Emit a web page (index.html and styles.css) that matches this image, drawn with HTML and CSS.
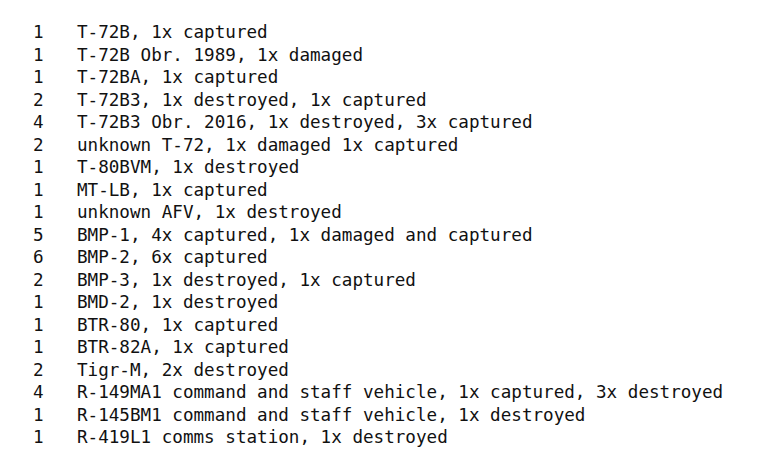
FILE: index.html
```html
<!DOCTYPE html>
<html>
<head>
<meta charset="utf-8">
<link rel="stylesheet" href="styles.css">
</head>
<body>
<div class="list">
  <div class="row"><span class="num">1</span><span class="txt">T-72B, 1x captured</span></div>
  <div class="row"><span class="num">1</span><span class="txt">T-72B Obr. 1989, 1x damaged</span></div>
  <div class="row"><span class="num">1</span><span class="txt">T-72BA, 1x captured</span></div>
  <div class="row"><span class="num">2</span><span class="txt">T-72B3, 1x destroyed, 1x captured</span></div>
  <div class="row"><span class="num">4</span><span class="txt">T-72B3 Obr. 2016, 1x destroyed, 3x captured</span></div>
  <div class="row"><span class="num">2</span><span class="txt">unknown T-72, 1x damaged 1x captured</span></div>
  <div class="row"><span class="num">1</span><span class="txt">T-80BVM, 1x destroyed</span></div>
  <div class="row"><span class="num">1</span><span class="txt">MT-LB, 1x captured</span></div>
  <div class="row"><span class="num">1</span><span class="txt">unknown AFV, 1x destroyed</span></div>
  <div class="row"><span class="num">5</span><span class="txt">BMP-1, 4x captured, 1x damaged and captured</span></div>
  <div class="row"><span class="num">6</span><span class="txt">BMP-2, 6x captured</span></div>
  <div class="row"><span class="num">2</span><span class="txt">BMP-3, 1x destroyed, 1x captured</span></div>
  <div class="row"><span class="num">1</span><span class="txt">BMD-2, 1x destroyed</span></div>
  <div class="row"><span class="num">1</span><span class="txt">BTR-80, 1x captured</span></div>
  <div class="row"><span class="num">1</span><span class="txt">BTR-82A, 1x captured</span></div>
  <div class="row"><span class="num">2</span><span class="txt">Tigr-M, 2x destroyed</span></div>
  <div class="row"><span class="num">4</span><span class="txt">R-149MA1 command and staff vehicle, 1x captured, 3x destroyed</span></div>
  <div class="row"><span class="num">1</span><span class="txt">R-145BM1 command and staff vehicle, 1x destroyed</span></div>
  <div class="row"><span class="num">1</span><span class="txt">R-419L1 comms station, 1x destroyed</span></div>
</div>
</body>
</html>
```

FILE: styles.css
```css
html, body {
  margin: 0;
  padding: 0;
  background: #ffffff;
}
.list {
  padding: 21px 0 0 33px;
  font-family: "DejaVu Sans Mono", "Liberation Mono", monospace;
  font-size: 17.6px;
  color: #111111;
}
.row {
  display: flex;
  height: 22.5px;
  line-height: 22.5px;
  white-space: pre;
}
.num {
  width: 44px;
  flex: none;
}
.txt {
  flex: none;
}
```
